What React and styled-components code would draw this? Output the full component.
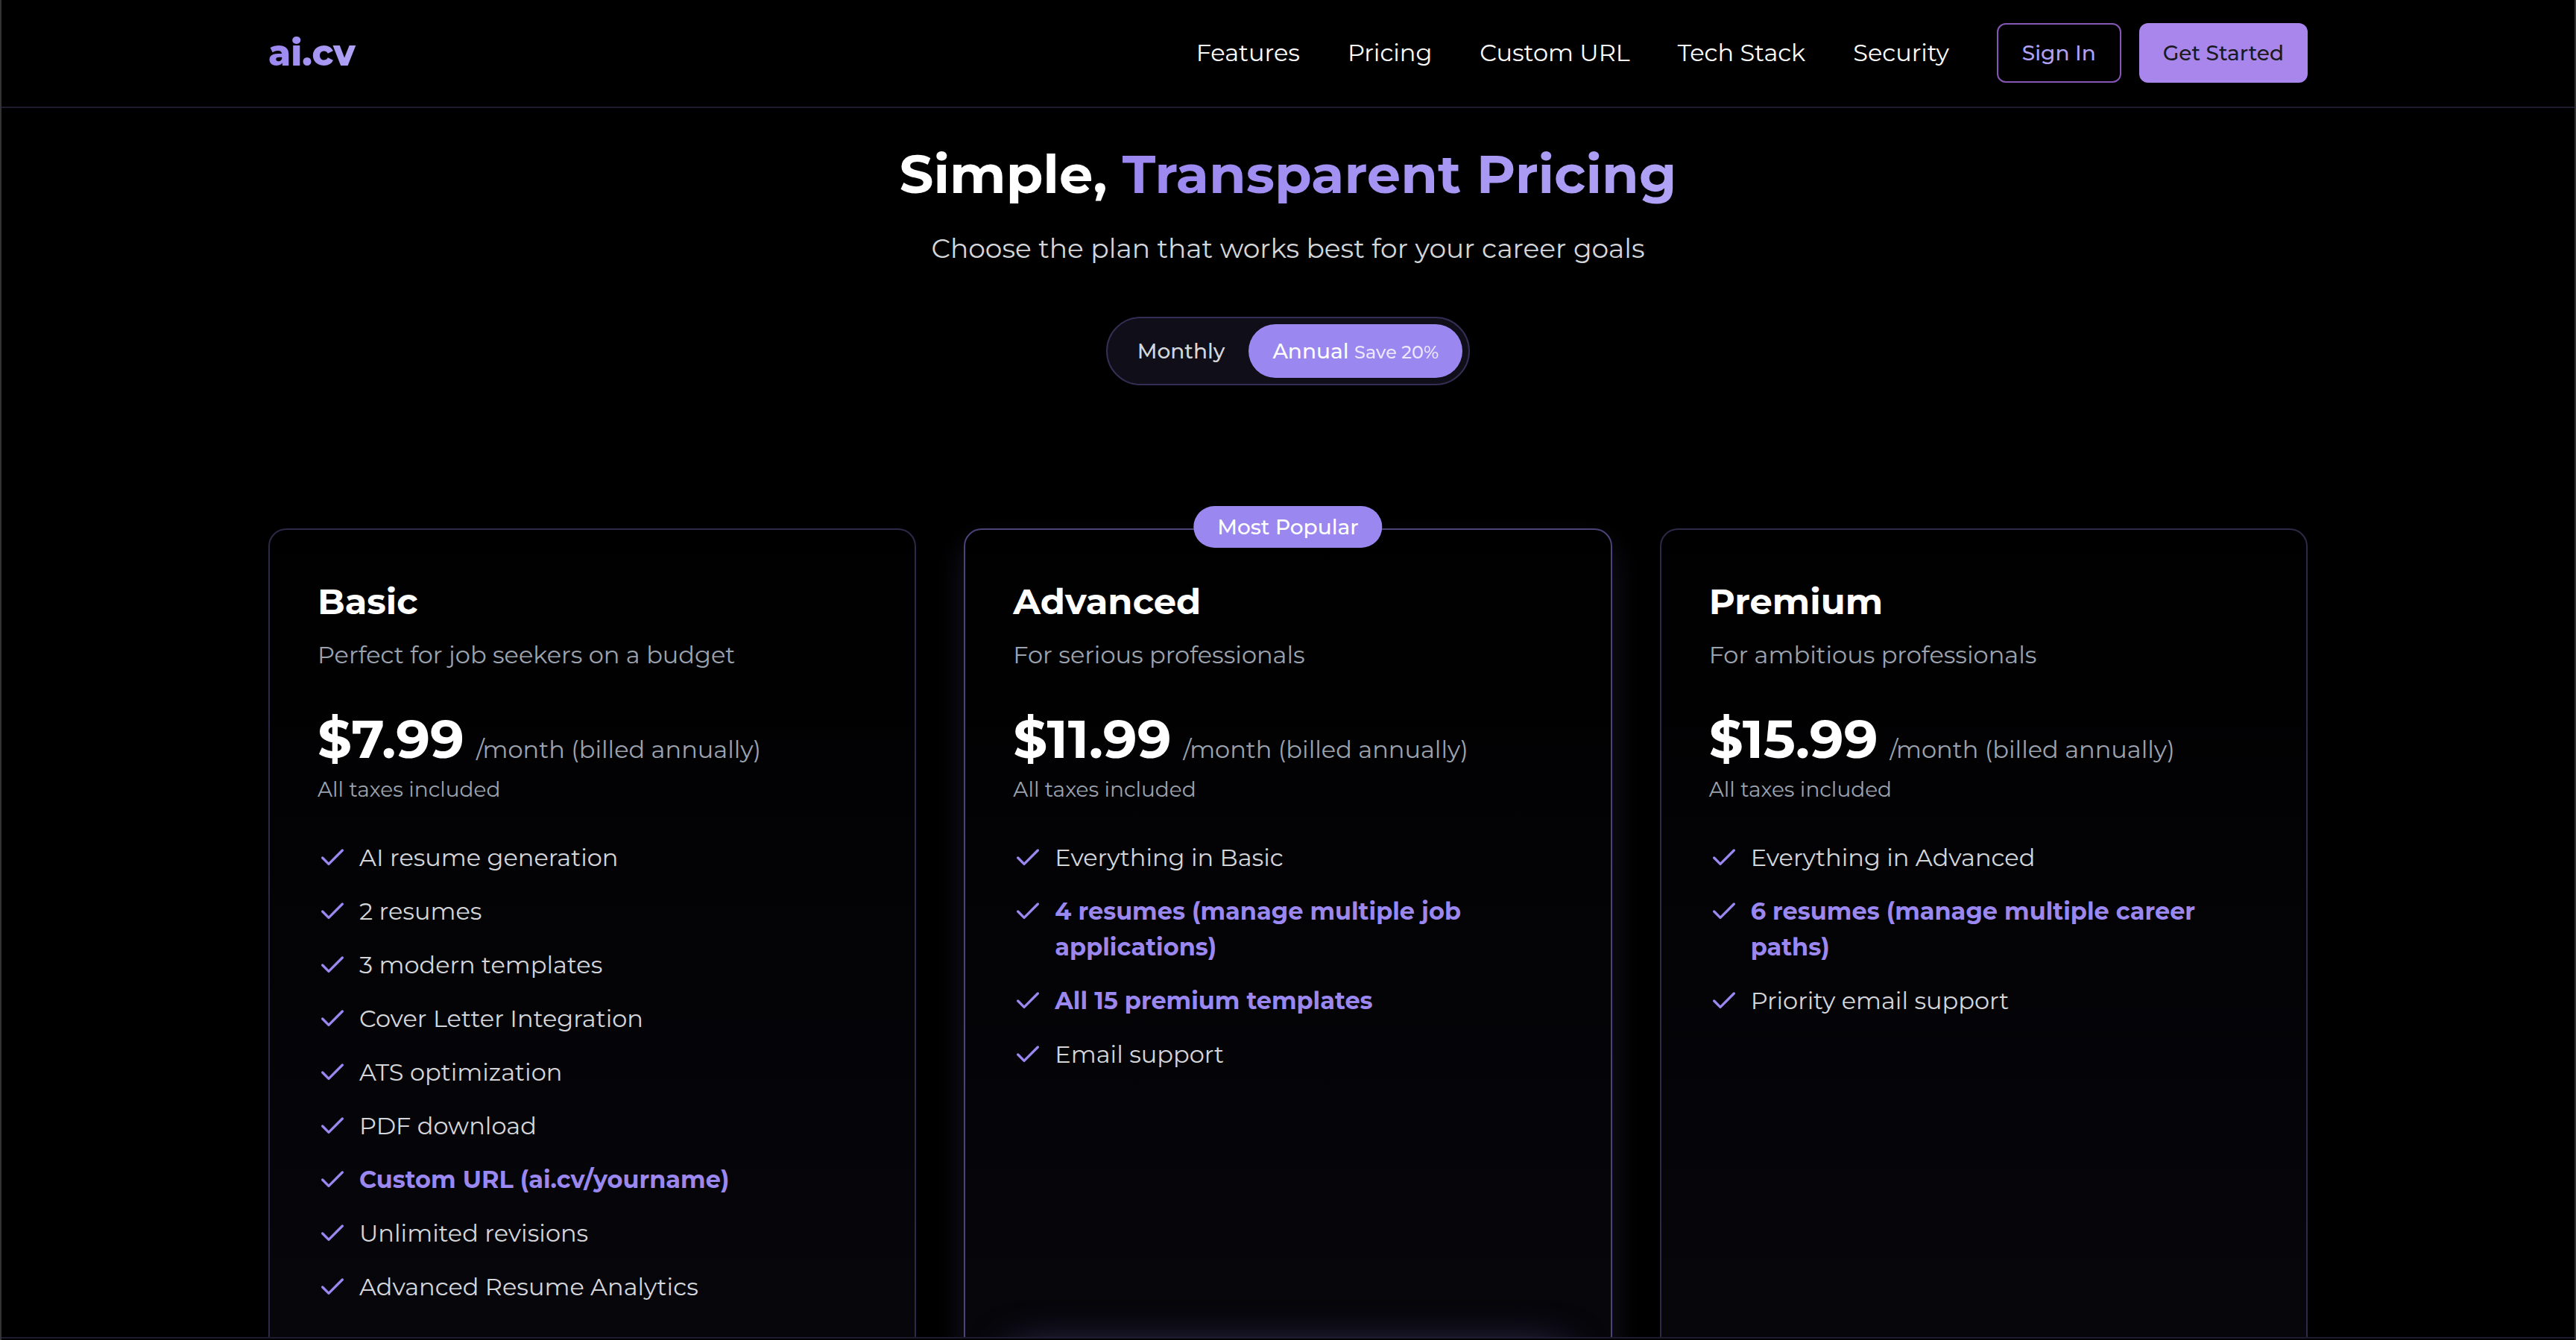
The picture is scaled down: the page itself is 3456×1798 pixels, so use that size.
import React, { useState } from 'react'
import styled, { createGlobalStyle } from 'styled-components'

const colors = {
  accent: '#9b87f0',
  accentLight: '#b0a2f5',
  muted: '#9ca3af',
  text: '#d4d6da',
  line: '#1e1a30',
}

const GlobalStyle = createGlobalStyle`
  * {
    box-sizing: border-box;
  }
  body {
    margin: 0;
    background: #000;
    color: white;
    font-family: Montserrat, Inter, 'Liberation Sans', sans-serif;
    font-size: 32px;
    line-height: 48px;
  }
  h1, h2, p, ul {
    margin: 0;
    padding: 0;
  }
  button {
    font-family: inherit;
    cursor: pointer;
  }
`

const Page = styled.div`
  display: flex;
  flex-direction: column;
  height: 100vh;
  overflow: hidden;
  border: solid #333;
  border-width: 0 2px;
`

const Container = styled.div`
  width: 100%;
  max-width: 2800px;
  margin: 0 auto;
  padding: 0 32px;
`

const Header = styled.header`
  flex-shrink: 0;
  border-bottom: 2px solid ${colors.line};
`

const HeaderContent = styled(Container)`
  display: flex;
  align-items: center;
  justify-content: space-between;
  padding-top: 31px;
  padding-bottom: 32px;
`

const Logo = styled.a`
  font-size: 48px;
  line-height: 64px;
  font-weight: 800;
  text-decoration: none;
  color: transparent;
  background: linear-gradient(90deg, ${colors.accent}, ${colors.accentLight});
  background-clip: text;
`

const Nav = styled.nav`
  display: flex;
  align-items: center;
  gap: 64px;
`

const NavLink = styled.a`
  color: white;
  text-decoration: none;
`

const Actions = styled.div`
  display: flex;
  gap: 24px;
`

const ActionButton = styled.button`
  height: 80px;
  padding: 0 32px;
  border: ${({ $filled }) => ($filled ? 'none' : '2px solid #8656b4')};
  border-radius: 12px;
  background: ${({ $filled }) => ($filled ? '#a886ec' : 'transparent')};
  color: ${({ $filled }) => ($filled ? '#1a1a1f' : '#b0a2f5')};
  font-size: 28px;
  font-weight: 500;
`

const Main = styled.main`
  flex: 1;
  min-height: 0;
  overflow: hidden;
`

const Intro = styled.section`
  display: flex;
  flex-direction: column;
  align-items: center;
  padding: 48px 0 192px;
`

const Title = styled.h1`
  font-size: 72px;
  line-height: 80px;
  font-weight: 700;
`

const Highlight = styled.span`
  color: transparent;
  background: linear-gradient(90deg, ${colors.accent}, ${colors.accentLight});
  background-clip: text;
`

const Subtitle = styled.p`
  margin: 32px 0 64px;
  font-size: 36px;
  line-height: 56px;
  color: ${colors.text};
`

const Toggle = styled.div`
  display: flex;
  padding: 8px;
  border: 2px solid #342d54;
  border-radius: 48px;
  background: #100e18;
`

const ToggleButton = styled.button`
  height: 72px;
  padding: 0 32px;
  border: none;
  border-radius: 36px;
  background: ${({ $active }) => ($active ? colors.accent : 'transparent')};
  color: ${({ $active }) => ($active ? 'white' : colors.text)};
  font-size: 28px;
  font-weight: 500;
`

const Saving = styled.span`
  font-size: 24px;
  opacity: 0.8;
`

const Plans = styled.div`
  display: grid;
  grid-template-columns: repeat(3, 1fr);
  gap: 64px;
`

const Card = styled.article`
  position: relative;
  padding: 64px;
  border: 2px solid ${({ $popular }) => ($popular ? '#4d437a' : '#2e2849')};
  border-radius: 24px;
  background: linear-gradient(180deg, #000, #08070d);
  box-shadow: ${({ $popular }) =>
    $popular ? '0 20px 40px rgba(155, 135, 240, 0.15)' : 'none'};
  display: flex;
  flex-direction: column;
`

const Badge = styled.span`
  position: absolute;
  top: -32px;
  left: 50%;
  transform: translateX(-50%);
  padding: 4px 32px;
  border-radius: 28px;
  background: ${colors.accent};
  font-size: 28px;
  font-weight: 500;
  white-space: nowrap;
`

const PlanName = styled.h2`
  font-size: 48px;
  line-height: 64px;
  font-weight: 700;
`

const PlanText = styled.p`
  margin: 16px 0 48px;
  color: ${colors.muted};
`

const PriceRow = styled.div`
  display: flex;
  align-items: baseline;
  gap: 16px;
`

const Price = styled.span`
  font-size: 72px;
  line-height: 80px;
  font-weight: 700;
`

const Period = styled.span`
  color: ${colors.muted};
`

const Taxes = styled.p`
  margin-top: 8px;
  font-size: 28px;
  line-height: 40px;
  color: ${colors.muted};
`

const FeatureList = styled.ul`
  display: flex;
  flex-direction: column;
  flex: 1;
  gap: 24px;
  margin: 48px 0 64px;
  list-style: none;
`

const Feature = styled.li`
  display: flex;
  align-items: flex-start;
  gap: 16px;
  color: ${({ $strong }) => ($strong ? colors.accent : colors.text)};
  font-weight: ${({ $strong }) => ($strong ? 700 : 400)};
`

const CheckIcon = styled.svg`
  flex-shrink: 0;
  width: 40px;
  height: 40px;
  margin-top: 4px;
  fill: none;
  stroke: ${colors.accent};
  stroke-width: 2;
  stroke-linecap: round;
  stroke-linejoin: round;
`

const ChooseButton = styled.button`
  height: 96px;
  border: none;
  border-radius: 16px;
  background: ${colors.accent};
  box-shadow: ${({ $popular }) =>
    $popular ? '0 0 60px rgba(155, 135, 240, 0.5)' : 'none'};
`

const BottomBar = styled.footer`
  flex-shrink: 0;
  height: 4px;
  border-top: 2px solid ${colors.line};
`

const links = ['Features', 'Pricing', 'Custom URL', 'Tech Stack', 'Security']

const plans = [
  {
    name: 'Basic',
    text: 'Perfect for job seekers on a budget',
    price: '$7.99',
    features: [
      { text: 'AI resume generation' },
      { text: '2 resumes' },
      { text: '3 modern templates' },
      { text: 'Cover Letter Integration' },
      { text: 'ATS optimization' },
      { text: 'PDF download' },
      { text: 'Custom URL (ai.cv/yourname)', strong: true },
      { text: 'Unlimited revisions' },
      { text: 'Advanced Resume Analytics' },
    ],
  },
  {
    name: 'Advanced',
    text: 'For serious professionals',
    price: '$11.99',
    popular: true,
    features: [
      { text: 'Everything in Basic' },
      { text: '4 resumes (manage multiple job applications)', strong: true },
      { text: 'All 15 premium templates', strong: true },
      { text: 'Email support' },
    ],
  },
  {
    name: 'Premium',
    text: 'For ambitious professionals',
    price: '$15.99',
    features: [
      { text: 'Everything in Advanced' },
      { text: '6 resumes (manage multiple career paths)', strong: true },
      { text: 'Priority email support' },
    ],
  },
]

const PlanCard = ({ plan }) => (
  <Card $popular={plan.popular}>
    {plan.popular && <Badge>Most Popular</Badge>}
    <PlanName>{plan.name}</PlanName>
    <PlanText>{plan.text}</PlanText>
    <PriceRow>
      <Price>{plan.price}</Price>
      <Period>/month (billed annually)</Period>
    </PriceRow>
    <Taxes>All taxes included</Taxes>
    <FeatureList>
      {plan.features.map((feature) => (
        <Feature key={feature.text} $strong={feature.strong}>
          <CheckIcon viewBox="0 0 24 24" aria-hidden="true">
            <path d="M20 6L9 17l-5-5" />
          </CheckIcon>
          <span>{feature.text}</span>
        </Feature>
      ))}
    </FeatureList>
    <ChooseButton $popular={plan.popular} aria-label={plan.name} />
  </Card>
)

const App = () => {
  const [annual, setAnnual] = useState(true)

  return (
    <Page>
      <GlobalStyle />
      <Header>
        <HeaderContent>
          <Logo href="#">ai.cv</Logo>
          <Nav>
            {links.map((link) => (
              <NavLink key={link} href="#">
                {link}
              </NavLink>
            ))}
            <Actions>
              <ActionButton>Sign In</ActionButton>
              <ActionButton $filled>Get Started</ActionButton>
            </Actions>
          </Nav>
        </HeaderContent>
      </Header>
      <Main>
        <Container>
          <Intro>
            <Title>
              Simple, <Highlight>Transparent Pricing</Highlight>
            </Title>
            <Subtitle>Choose the plan that works best for your career goals</Subtitle>
            <Toggle>
              <ToggleButton $active={!annual} onClick={() => setAnnual(false)}>
                Monthly
              </ToggleButton>
              <ToggleButton $active={annual} onClick={() => setAnnual(true)}>
                Annual <Saving>Save 20%</Saving>
              </ToggleButton>
            </Toggle>
          </Intro>
          <Plans>
            {plans.map((plan) => (
              <PlanCard key={plan.name} plan={plan} />
            ))}
          </Plans>
        </Container>
      </Main>
      <BottomBar />
    </Page>
  )
}

export default App
